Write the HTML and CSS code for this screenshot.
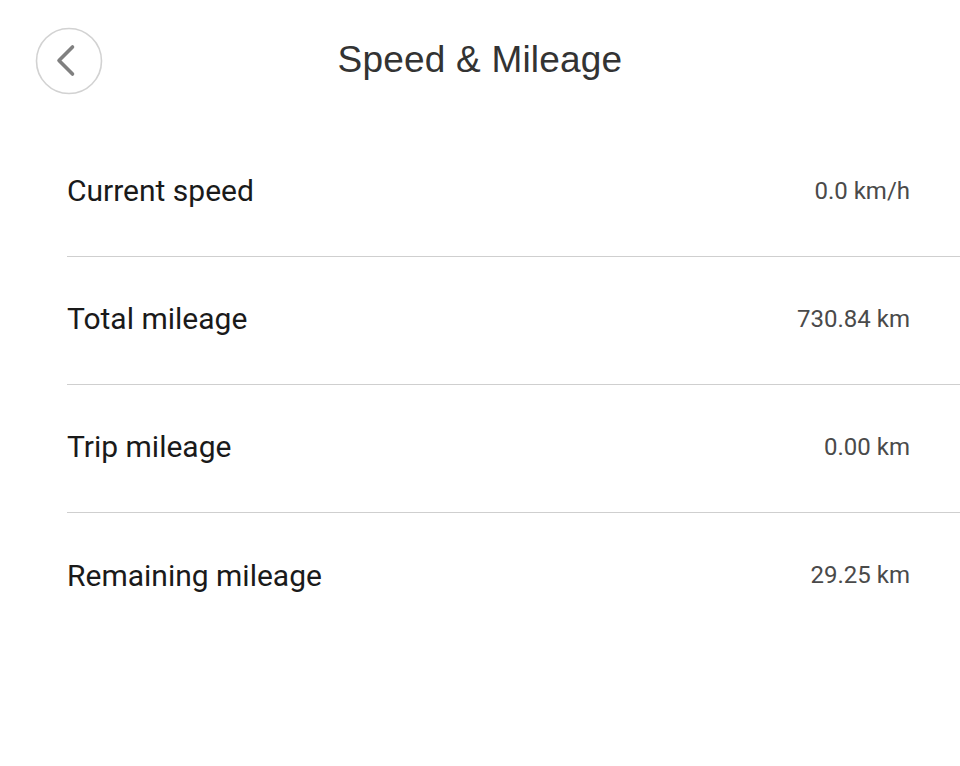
FILE: index.html
```html
<!DOCTYPE html>
<html>
<head>
<meta charset="utf-8">
<link rel="stylesheet" href="styles.css">
</head>
<body>
<div class="page">
  <header class="header">
    <button class="back" aria-label="Back">
      <svg width="68" height="68" viewBox="0 0 68 68">
        <circle cx="34" cy="34" r="32.5" fill="none" stroke="#d2d2d2" stroke-width="1.6"/>
        <path d="M37.5 20 L24 33.5 L37.5 47" fill="none" stroke="#808080" stroke-width="3.6" stroke-linecap="round" stroke-linejoin="round"/>
      </svg>
    </button>
    <h1 class="title">Speed &amp; Mileage</h1>
  </header>
  <ul class="list">
    <li class="row"><span class="label">Current speed</span><span class="value">0.0 km/h</span></li>
    <li class="row"><span class="label">Total mileage</span><span class="value">730.84 km</span></li>
    <li class="row"><span class="label">Trip mileage</span><span class="value">0.00 km</span></li>
    <li class="row"><span class="label">Remaining mileage</span><span class="value">29.25 km</span></li>
  </ul>
</div>
</body>
</html>
```
FILE: styles.css
```css
* { box-sizing: border-box; }
html, body { margin: 0; padding: 0; background: #fff; }
.page { width: 960px; height: 766px; }
.header {
  position: relative;
  height: 129px;
  display: flex;
  justify-content: center;
  padding-top: 36px;
}
.back {
  position: absolute;
  left: 35px;
  top: 27px;
  width: 68px;
  height: 68px;
  padding: 0;
  margin: 0;
  border: none;
  background: none;
  display: flex;
  align-items: center;
  justify-content: center;
}
.title {
  margin: 0;
  font-family: "Liberation Sans", Arial, sans-serif;
  font-weight: 400;
  font-size: 37px;
  line-height: 48px;
  height: 48px;
  color: #333;
  letter-spacing: 0.2px;
}
.list { list-style: none; margin: 0; padding: 0 0 0 67px; }
.row {
  height: 128px;
  display: flex;
  align-items: center;
  justify-content: space-between;
  padding-right: 50px;
  border-bottom: 1.5px solid #cfcfcf;
  padding-bottom: 4px;
}
.row:last-child { border-bottom: none; }
.label {
  font-family: Roboto, sans-serif;
  font-weight: 400;
  font-size: 30px;
  color: #1a1a1a;
}
.value {
  font-family: Roboto, sans-serif;
  font-weight: 400;
  font-size: 24px;
  color: #4a4a4a;
}
```
